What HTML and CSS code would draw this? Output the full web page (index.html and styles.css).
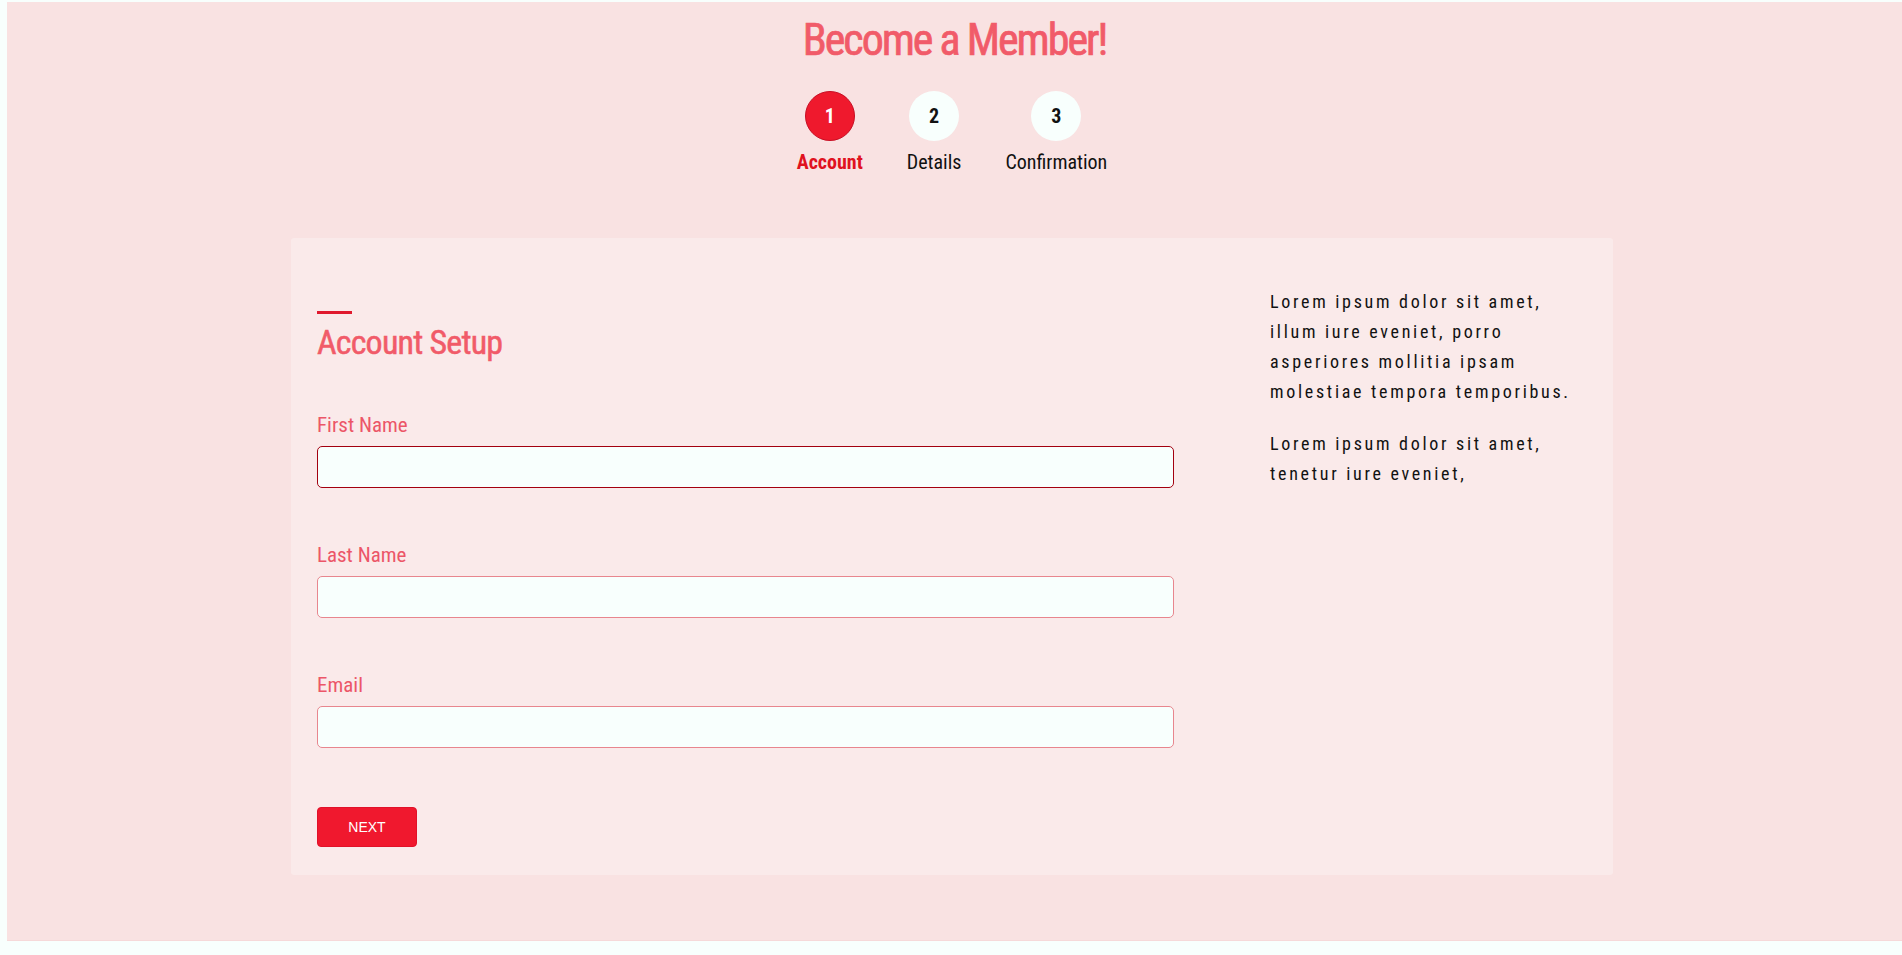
FILE: index.html
```html
<!DOCTYPE html>
<html>
<head>
<meta charset="utf-8">
<title>Become a Member!</title>
<link rel="stylesheet" href="styles.css">
</head>
<body>
<div class="page">
  <h1 class="title">Become a Member!</h1>
  <ol class="steps">
    <li class="step active"><span class="num">1</span><span class="label">Account</span></li>
    <li class="step"><span class="num">2</span><span class="label">Details</span></li>
    <li class="step"><span class="num">3</span><span class="label">Confirmation</span></li>
  </ol>
  <section class="card">
    <form class="form">
      <div class="bar"></div>
      <h2 class="heading">Account Setup</h2>
      <div class="field">
        <label class="flabel" for="fn">First Name</label>
        <input class="input focus" id="fn" type="text">
      </div>
      <div class="field">
        <label class="flabel" for="ln">Last Name</label>
        <input class="input" id="ln" type="text">
      </div>
      <div class="field">
        <label class="flabel" for="em">Email</label>
        <input class="input" id="em" type="text">
      </div>
      <button class="btn" type="button">NEXT</button>
    </form>
    <aside class="side">
      <p>Lorem ipsum dolor sit amet, illum iure eveniet, porro asperiores mollitia ipsam molestiae tempora temporibus.</p>
      <p>Lorem ipsum dolor sit amet, tenetur iure eveniet,</p>
    </aside>
  </section>
</div>
</body>
</html>
```
FILE: styles.css
```css
html, body {
  margin: 0;
  padding: 0;
  background: #f8fffd;
}
body {
  font-family: "Roboto Condensed", "DejaVu Sans Condensed", sans-serif;
}
.page {
  margin: 2px 0 0 7px;
  height: 939px;
  background: #f9e2e2;
  padding-top: 12px;
  box-sizing: border-box;
  border-bottom: 1px solid #f6d9d9;
}
.title {
  margin: 0;
  text-align: center;
  font-size: 44px;
  line-height: 52px;
  font-weight: 400;
  letter-spacing: -2px;
  color: #f15b69;
  -webkit-text-stroke: 0.7px #f15b69;
}
.steps {
  list-style: none;
  margin: 25px 0 0;
  padding: 0 5px 0 0;
  display: flex;
  justify-content: center;
  gap: 44px;
}
.step {
  display: flex;
  flex-direction: column;
  align-items: center;
}
.num {
  width: 50px;
  height: 50px;
  border-radius: 50%;
  background: #f8fffd;
  color: #111;
  font-weight: 700;
  font-size: 20px;
  display: flex;
  align-items: center;
  justify-content: center;
  box-sizing: border-box;
}
.label {
  margin-top: 9px;
  font-size: 20px;
  line-height: 24px;
  color: #111;
}
.step.active .num {
  background: #ef192d;
  border: 1px solid #c70f24;
  color: #fff;
}
.step.active .label {
  color: #e0121f;
  font-weight: 700;
}
.card {
  margin: 64px 0 0 284px;
  width: 1322px;
  height: 637px;
  box-sizing: border-box;
  background: #faeaea;
  border-radius: 3px;
  padding: 0 26px;
  display: grid;
  grid-template-columns: 857px 317px;
  column-gap: 96px;
}
.form {
  padding-top: 73px;
}
.bar {
  width: 35px;
  height: 3px;
  background: #e0192e;
}
.heading {
  margin: 8px 0 0;
  font-size: 34px;
  line-height: 40px;
  font-weight: 400;
  letter-spacing: -0.8px;
  color: #f15b69;
  -webkit-text-stroke: 0.5px #f15b69;
}
.field {
  display: flex;
  flex-direction: column;
  margin-top: 55px;
}
.heading + .field {
  margin-top: 51px;
}
.flabel {
  font-size: 21px;
  line-height: 25px;
  color: #ec5668;
  margin-bottom: 8px;
}
.input {
  height: 42px;
  box-sizing: border-box;
  border: 1px solid #e8868e;
  border-radius: 5px;
  background: #f8fffd;
  outline: none;
  margin: 0;
}
.input.focus {
  border-color: #a3000f;
}
.btn {
  display: block;
  margin-top: 59px;
  width: 100px;
  height: 40px;
  background: #f0182e;
  border: 1px solid #e11129;
  border-radius: 4px;
  color: #fff;
  font-family: "Liberation Sans", Arial, sans-serif;
  font-size: 14px;
  padding: 0;
}
.side {
  padding-top: 49px;
}
.side p {
  margin: 0 0 22px;
  font-size: 18px;
  line-height: 30px;
  letter-spacing: 2.7px;
  color: #111;
}
```
